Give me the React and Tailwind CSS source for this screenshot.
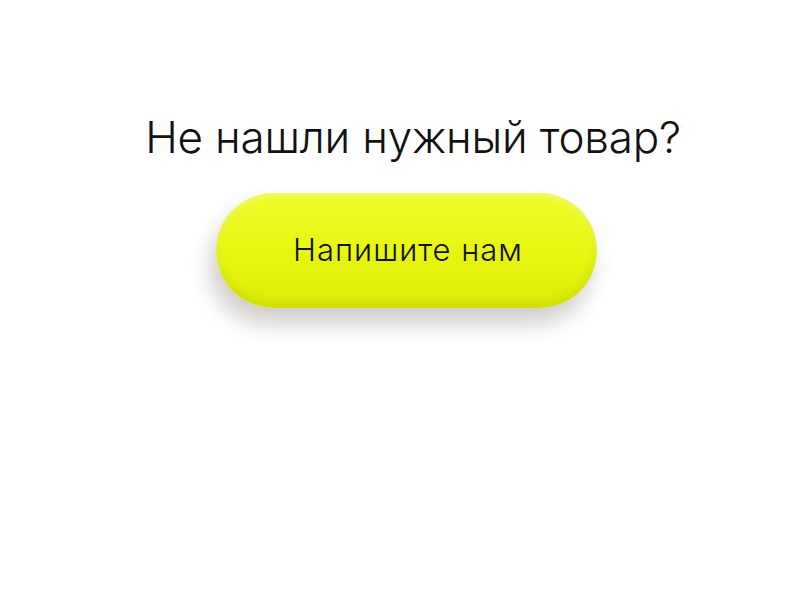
import React from 'react';

const App = () => {
  return (
    <div className="w-[800px] h-[600px] bg-white flex flex-col items-center font-['Inter',sans-serif]">
      <h1 className="mt-[109px] ml-[26px] text-[44px] leading-[56px] font-light text-[#111] tracking-[-0.2px]">
        Не нашли нужный товар?
      </h1>
      <button className="mt-[28px] ml-[13px] w-[381px] h-[115px] rounded-full bg-gradient-to-b from-[#eefb2a] via-[#e8f70f] to-[#dcec06] shadow-[-6px_16px_22px_rgba(90,80,60,0.28),inset_0_3px_6px_rgba(255,255,255,0.35),inset_0_-4px_8px_rgba(150,160,0,0.25)] flex items-center justify-center">
        <span className="ml-[3px] text-[31px] font-light text-[#111] tracking-[1px]">Напишите нам</span>
      </button>
    </div>
  );
};

export default App;
